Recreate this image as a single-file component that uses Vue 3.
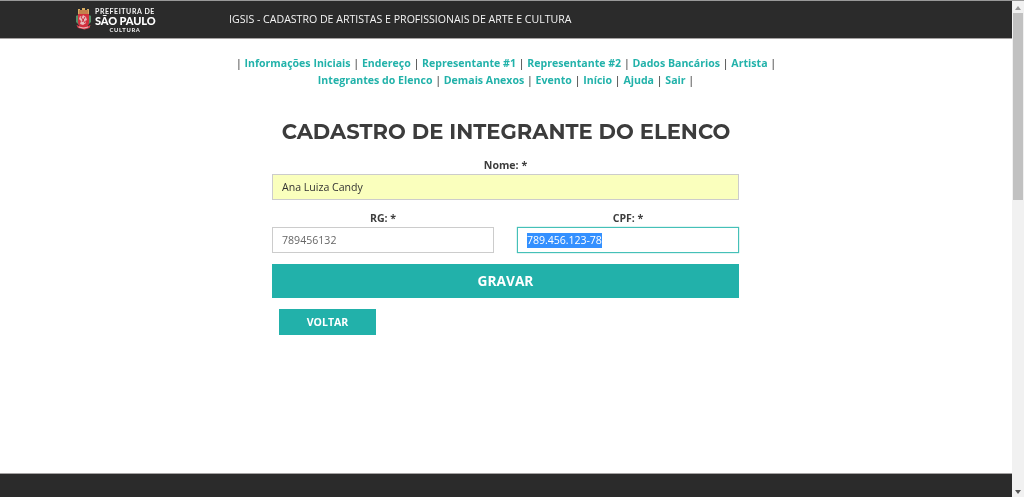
<script setup>
const navRows = [
  ['Informações Iniciais', 'Endereço', 'Representante #1', 'Representante #2', 'Dados Bancários', 'Artista'],
  ['Integrantes do Elenco', 'Demais Anexos', 'Evento', 'Início', 'Ajuda', 'Sair'],
]
</script>

<template>
  <div class="window">
    <div class="page">
      <header class="topbar">
        <div class="logo">
          <svg class="crest" viewBox="0 0 17 22">
            <path d="M3 1h2v1h2V0h3v2h2V1h2v5H3z" fill="#d9ae62" />
            <path d="M4 3h9M4 5h9" stroke="#a33c2c" stroke-width=".8" />
            <path d="M1 8q2-2 3 1v8l-3-3zM16 8q-2-2-3 1v8l3-3z" fill="#55916a" />
            <path d="M3 6h11v8q0 5-5.500 6Q3 19 3 14z" fill="#d32f3d" />
            <path d="M5 8l2 1 1-2 3 2 1 3-2 1 1 2-3 2-3-1 1-3-2-2z" fill="#e8b9bb" />
            <path d="M6 9l4 6M10 9l-3 5" stroke="#c92d3a" stroke-width="1" />
            <path d="M1.500 17l5 2h4l5-2-1 3-5 1.500L3 20z" fill="#e04350" />
            <path d="M4 19l4 1h1l4-1" fill="none" stroke="#eee" stroke-width=".7" />
          </svg>
          <div class="logo-text">
            <span class="l1">PREFEITURA DE</span>
            <span class="l2">SÃO PAULO</span>
            <span class="l3">CULTURA</span>
          </div>
        </div>
        <div class="system">IGSIS - CADASTRO DE ARTISTAS E PROFISSIONAIS DE ARTE E CULTURA</div>
      </header>

      <main class="content">
        <nav class="menu">
          <div v-for="(row, i) in navRows" :key="i" class="menu-row">
            <span v-if="i === 0">| </span><template v-for="item in row" :key="item"><a>{{ item }}</a> | </template>
          </div>
        </nav>
        <h1>CADASTRO DE INTEGRANTE DO ELENCO</h1>
        <form class="form" @submit.prevent>
          <div class="field">
            <label>Nome: *</label>
            <div class="input filled">Ana Luiza Candy</div>
          </div>
          <div class="pair">
            <div class="field">
              <label>RG: *</label>
              <div class="input">789456132</div>
            </div>
            <div class="field">
              <label>CPF: *</label>
              <div class="input focused"><span class="selected">789.456.123-78</span></div>
            </div>
          </div>
          <button class="save">GRAVAR</button>
          <button class="back">VOLTAR</button>
        </form>
      </main>
      <footer class="bottom"></footer>
    </div>
    <div class="scrollbar">
      <svg class="arrow" viewBox="0 0 6 4"><path d="M3 0l3 4H0z" fill="#999" /></svg>
      <div class="thumb"></div>
      <svg class="arrow down" viewBox="0 0 6 4"><path d="M0 0h6L3 4z" fill="#555" /></svg>
    </div>
  </div>
</template>

<style>
html, body { overflow: hidden; background: #fff; }
</style>

<style scoped>
* { box-sizing: border-box; }
.window { display: flex; width: 1024px; height: 497px; font-family: "Open Sans", sans-serif; color: #3d3d3d; border-top: 1px solid #999; will-change: transform; }
.page { width: 1012px; display: flex; flex-direction: column; }
.topbar { height: 38px; flex: none; background: #2b2b2b; border-bottom: 1px solid #a5a2a2; display: flex; color: #f4f4f4; }
.logo { display: flex; width: 229px; padding: 7px 0 0 75px; }
.crest { width: 17px; height: 22px; flex: none; }
.logo-text { display: flex; flex-direction: column; margin-left: 3px; font-family: Lato, sans-serif; font-weight: 700; white-space: nowrap; }
.l1 { font-size: 7px; line-height: 7px; letter-spacing: .57px; }
.l2 { font-size: 11px; line-height: 11px; font-weight: 900; color: #fff; letter-spacing: -.1px; }
.l3 { font-size: 5.8px; line-height: 7px; letter-spacing: .7px; margin-left: 14.5px; }
.system { font-size: 10.58px; line-height: 37px; white-space: nowrap; }
.content { flex: 1; }
.menu { padding-top: 16px; font-size: 10.58px; line-height: 17px; text-align: center; color: #222; }
.menu-row { white-space: nowrap; }
.menu a { color: #22b2aa; font-weight: 700; }
h1 { margin: 29px 0 0; height: 28px; line-height: 28px; font-family: Montserrat, Inter, sans-serif; font-size: 21.1px; font-weight: 700; text-align: center; white-space: nowrap; color: #3c3c3c; }
.form { width: 467px; margin: 11px 0 0 272px; }
.field label { display: block; height: 17px; line-height: 17px; font-size: 10.58px; font-weight: 700; text-align: center; }
.input { height: 26px; border: 1px solid #ccc; padding: 0 9px; line-height: 25px; font-size: 10.58px; color: #666; }
.filled { background: #faffbd; color: #333; }
.focused { border-color: #45c0b8; box-shadow: 0 0 1px #45c0b8; color: #fff; }
.selected { display: inline-block; background: #3390ff; height: 15px; line-height: 15px; letter-spacing: -.05px; }
.pair { display: grid; grid-template-columns: 222px 222px; column-gap: 23px; margin-top: 10px; }
button { display: block; border: 0; border-radius: 0; padding: 0; background: #22b1aa; color: #fff; font-family: inherit; font-weight: 700; text-align: center; }
.save { width: 467px; height: 34px; margin-top: 11px; padding-bottom: 1px; font-size: 13.7px; }
.back { width: 97px; height: 26px; margin: 11px 0 0 7px; font-size: 10.58px; }
.bottom { height: 24px; background: #2b2b2b; border-top: 1px solid #a5a2a2; }
.scrollbar { width: 12px; background: #f1f1f1; display: flex; flex-direction: column; align-items: center; }
.arrow { width: 6px; height: 4px; margin-top: 5px; flex: none; }
.thumb { width: 10px; height: 187px; margin-top: 3px; background: #c1c1c1; }
.down { margin-top: auto; margin-bottom: 3px; }
</style>
